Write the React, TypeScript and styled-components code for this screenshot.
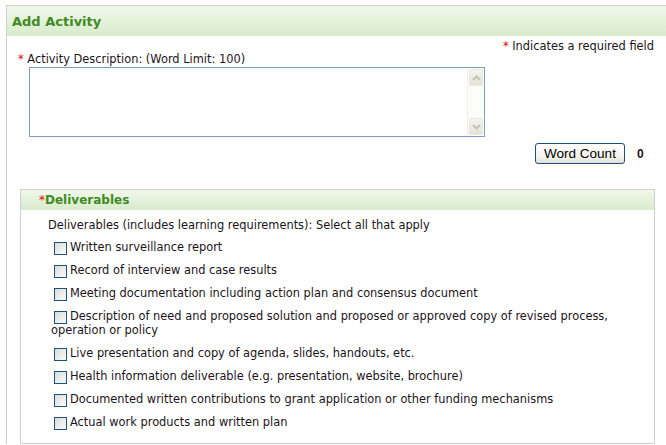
import React, { ReactElement, useState } from 'react';
import styled, { createGlobalStyle } from 'styled-components';

const GlobalStyle = createGlobalStyle`
  body {
    margin: 0;
    background: #fff;
    font-family: "DejaVu Sans", Verdana, sans-serif;
    font-size: 11.4px;
    color: #1c1420;
  }
`;

const Panel = styled.section`
  box-sizing: border-box;
  margin: 5px 0 0 6px;
  width: 660px;
  border-top: 1px solid #cfcfcf;
  border-left: 1px solid #cfcfcf;
`;

const PanelHeader = styled.h2`
  margin: 0;
  height: 30px;
  line-height: 31px;
  padding-left: 5px;
  font-size: 13px;
  font-weight: bold;
  color: #3f8a24;
  background: linear-gradient(#f1f8ec, #d8ebca);
`;

const PanelBody = styled.div`
  width: 635px;
  padding: 4px 0 0 13px;
`;

const Star = styled.span`
  color: #d10d0d;
  font-weight: normal;
`;

const RequiredNote = styled.div`
  text-align: right;
  line-height: 13px;
  padding-right: 1px;
`;

const FieldLabel = styled.label`
  display: block;
  margin-left: -2px;
  line-height: 13px;
`;

const TextBox = styled.div`
  display: flex;
  margin: 1px 0 0 9px;
  width: 454px;
  height: 68px;
  border: 1px solid #7f9db9;
`;

const TextInput = styled.textarea`
  flex: 1;
  border: none;
  outline: none;
  resize: none;
  overflow: hidden;
  font: inherit;
  padding: 2px;
`;

const ScrollTrack = styled.div`
  width: 16px;
  display: flex;
  flex-direction: column;
  justify-content: space-between;
  background: #fcfcf9;
  border-left: 1px solid #f0efe8;
  padding: 1px 0;
`;

const ScrollArrow = styled.div`
  height: 15px;
  margin: 0 1px;
  border: 1px solid #e8e7e0;
  border-radius: 2px;
  background: linear-gradient(#f4f4ef, #e3e2da);
  display: flex;
  align-items: center;
  justify-content: center;
`;

const CountRow = styled.div`
  display: flex;
  justify-content: flex-end;
  align-items: center;
  gap: 12px;
  margin-top: 6px;
  padding-right: 12px;
`;

const CountButton = styled.button`
  width: 90px;
  height: 21px;
  padding: 0;
  border: 1px solid #1b4f7c;
  border-radius: 3px;
  background: linear-gradient(#ffffff, #f3f2ec 70%, #e2e0d6);
  font-family: "Liberation Sans", Arial, sans-serif;
  font-size: 13.5px;
  color: #000;
`;

const CountValue = styled.b`
  font-family: "Liberation Sans", Arial, sans-serif;
  font-size: 12px;
  width: 6px;
`;

const Group = styled.fieldset`
  margin: 25px 0 0;
  padding: 0 0 9px;
  border: 1px solid #cfcfcf;
  min-width: 0;
`;

const GroupHeader = styled.div`
  height: 20px;
  line-height: 21px;
  padding-left: 18px;
  font-size: 12px;
  font-weight: bold;
  color: #3f8a24;
  background: linear-gradient(#f1f8ec, #d8ebca);
`;

const GroupIntro = styled.p`
  margin: 8px 0 4px 27px;
  line-height: 14px;
`;

const OptionList = styled.ul`
  list-style: none;
  margin: 0;
  padding: 0 20px 0 30px;
`;

const Option = styled.li`
  line-height: 14px;
  padding: 4px 0 5px;
`;

const Check = styled.input`
  appearance: none;
  box-sizing: border-box;
  width: 13px;
  height: 13px;
  margin: -2px 3px -2px 3px;
  vertical-align: -2px;
  border: 1px solid #1c5180;
  background: linear-gradient(135deg, #dcdcd6, #fbfbfa);
  &:checked {
    box-shadow: inset 0 0 0 2px #fff, inset 0 0 0 13px #21a121;
  }
`;

const deliverables = [
  'Written surveillance report',
  'Record of interview and case results',
  'Meeting documentation including action plan and consensus document',
  'Description of need and proposed solution and proposed or approved copy of revised process, operation or policy',
  'Live presentation and copy of agenda, slides, handouts, etc.',
  'Health information deliverable (e.g. presentation, website, brochure)',
  'Documented written contributions to grant application or other funding mechanisms',
  'Actual work products and written plan',
];

function Chevron({ up }: { up: boolean }): ReactElement {
  return (
    <svg width="9" height="6" viewBox="0 0 9 6">
      <path d={up ? 'M1 5 L4.5 1.5 L8 5' : 'M1 1 L4.5 4.5 L8 1'} fill="none" stroke="#c2c2bb" strokeWidth="2" />
    </svg>
  );
}

function App(): ReactElement {
  const [text, setText] = useState('');
  const [count, setCount] = useState(0);

  const handleCount = (): void => {
    setCount(text.trim() ? text.trim().split(/\s+/).length : 0);
  };

  return (
    <>
      <GlobalStyle />
      <Panel>
        <PanelHeader>Add Activity</PanelHeader>
        <PanelBody>
          <RequiredNote>
            <Star>*</Star> Indicates a required field
          </RequiredNote>
          <FieldLabel htmlFor="desc">
            <Star>*</Star> Activity Description: (Word Limit: 100)
          </FieldLabel>
          <TextBox>
            <TextInput id="desc" value={text} onChange={(e) => setText(e.target.value)} />
            <ScrollTrack>
              <ScrollArrow>
                <Chevron up />
              </ScrollArrow>
              <ScrollArrow>
                <Chevron up={false} />
              </ScrollArrow>
            </ScrollTrack>
          </TextBox>
          <CountRow>
            <CountButton type="button" onClick={handleCount}>
              Word Count
            </CountButton>
            <CountValue>{count}</CountValue>
          </CountRow>
          <Group>
            <GroupHeader>
              <Star>*</Star>Deliverables
            </GroupHeader>
            <GroupIntro>Deliverables (includes learning requirements): Select all that apply</GroupIntro>
            <OptionList>
              {deliverables.map((item) => (
                <Option key={item}>
                  <label>
                    <Check type="checkbox" />
                    {item}
                  </label>
                </Option>
              ))}
            </OptionList>
          </Group>
        </PanelBody>
      </Panel>
    </>
  );
}

export default App;
